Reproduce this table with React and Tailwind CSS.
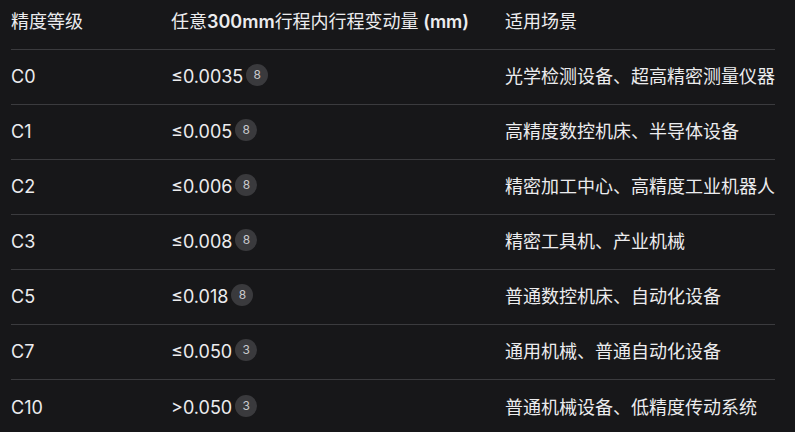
const rows = [
  { grade: "C0", value: "≤0.0035", ref: "8", use: "光学检测设备、超高精密测量仪器" },
  { grade: "C1", value: "≤0.005", ref: "8", use: "高精度数控机床、半导体设备" },
  { grade: "C2", value: "≤0.006", ref: "8", use: "精密加工中心、高精度工业机器人" },
  { grade: "C3", value: "≤0.008", ref: "8", use: "精密工具机、产业机械" },
  { grade: "C5", value: "≤0.018", ref: "8", use: "普通数控机床、自动化设备" },
  { grade: "C7", value: "≤0.050", ref: "3", use: "通用机械、普通自动化设备" },
  { grade: "C10", value: ">0.050", ref: "3", use: "普通机械设备、低精度传动系统" },
];

const Badge = ({ n }) => (
  <span className="ml-[3px] inline-flex h-[22px] w-[22px] -translate-y-[2px] items-center justify-center rounded-full bg-[#3a3a3d] text-[12px] leading-none text-[#c9c9cc]">
    {n}
  </span>
);

const App = () => {
  return (
    <div
      className="h-[432px] w-[795px] overflow-hidden bg-[#171719] text-[18px] text-[#ececee]"
      style={{ fontFamily: 'Inter, "Noto Sans CJK SC", sans-serif' }}
    >
      <div className="ml-[11px] w-[764px]">
        <div className="flex h-[50px] items-start border-b border-[#3b3b3e] pt-[9px] leading-[26px]">
          <div className="w-[160px]">精度等级</div>
          <div className="w-[334px] whitespace-nowrap">
            任意<span className="font-semibold">300mm</span>行程内行程变动量
            <span className="font-semibold"> (mm)</span>
          </div>
          <div className="flex-1">适用场景</div>
        </div>
        {rows.map((r, i) => (
          <div
            key={r.grade}
            className={`flex h-[55px] items-center leading-[26px] ${
              i < rows.length - 1 ? "border-b border-[#3b3b3e]" : ""
            }`}
          >
            <div className="w-[160px]">{r.grade}</div>
            <div className="flex w-[334px] items-center">
              {r.value}
              <Badge n={r.ref} />
            </div>
            <div className="flex-1 whitespace-nowrap">{r.use}</div>
          </div>
        ))}
      </div>
    </div>
  );
};

export default App;
